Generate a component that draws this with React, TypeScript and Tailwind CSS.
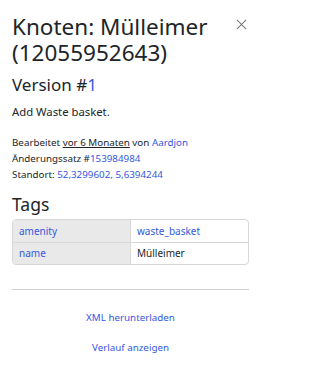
const linkCls = 'text-[#3558e0] hover:underline'

const tags: [string, string, boolean][] = [
  ['amenity', 'waste_basket', true],
  ['name', 'Mülleimer', false],
]

export default function App() {
  return (
    <div
      className="w-[261px] h-[375px] bg-white text-[#212529] px-3 pt-[14px]"
      style={{ fontFamily: '"Noto Sans", "Open Sans", sans-serif' }}
    >
      <div className="flex items-start justify-between">
        <h2 className="text-[22.5px] leading-[26px] font-normal">
          Knoten: Mülleimer (12055952643)
        </h2>
        <button className="mt-[5px] mr-[2px] w-[11px] h-[11px] shrink-0 text-[#777]" aria-label="close">
          <svg viewBox="0 0 12 12" className="w-full h-full" fill="none" stroke="currentColor" strokeWidth="1.1">
            <path d="M1 1 L11 11 M11 1 L1 11" />
          </svg>
        </button>
      </div>
      <h3 className="text-[17px] leading-[22px] mt-[8px]">
        Version #<a className={linkCls}>1</a>
      </h3>
      <p className="text-[11.3px] leading-[16px] mt-[8px]">Add Waste basket.</p>
      <div className="text-[9.8px] leading-[16px] mt-[15px]">
        <div>
          Bearbeitet <span className="underline">vor 6 Monaten</span> von <a className={linkCls}>Aardjon</a>
        </div>
        <div>
          Änderungssatz #<a className={linkCls}>153984984</a>
        </div>
        <div>
          Standort: <a className={linkCls}>52,3299602, 5,6394244</a>
        </div>
      </div>
      <h4 className="text-[17.5px] leading-[22px] mt-[10px]">Tags</h4>
      <div className="mt-[4px] border border-[#d8d8d8] rounded-[4px] overflow-hidden text-[10px]">
        {tags.map(([k, v, isLink], i) => (
          <div key={k} className={`flex h-[22px] ${i > 0 ? 'border-t border-[#d8d8d8]' : ''}`}>
            <div className="w-[118px] bg-[#e9e9e9] border-r border-[#d8d8d8] px-[6px] flex items-center">
              <a className={linkCls}>{k}</a>
            </div>
            <div className="flex-1 px-[6px] flex items-center">
              {isLink ? <a className={linkCls}>{v}</a> : <span>{v}</span>}
            </div>
          </div>
        ))}
      </div>
      <hr className="mt-[24px] border-t border-[#d0d0d0]" />
      <div className="flex flex-col items-center text-[9.8px] leading-[16px] mt-[20px] gap-[14px]">
        <a className={linkCls}>XML herunterladen</a>
        <a className={linkCls}>Verlauf anzeigen</a>
      </div>
    </div>
  )
}
